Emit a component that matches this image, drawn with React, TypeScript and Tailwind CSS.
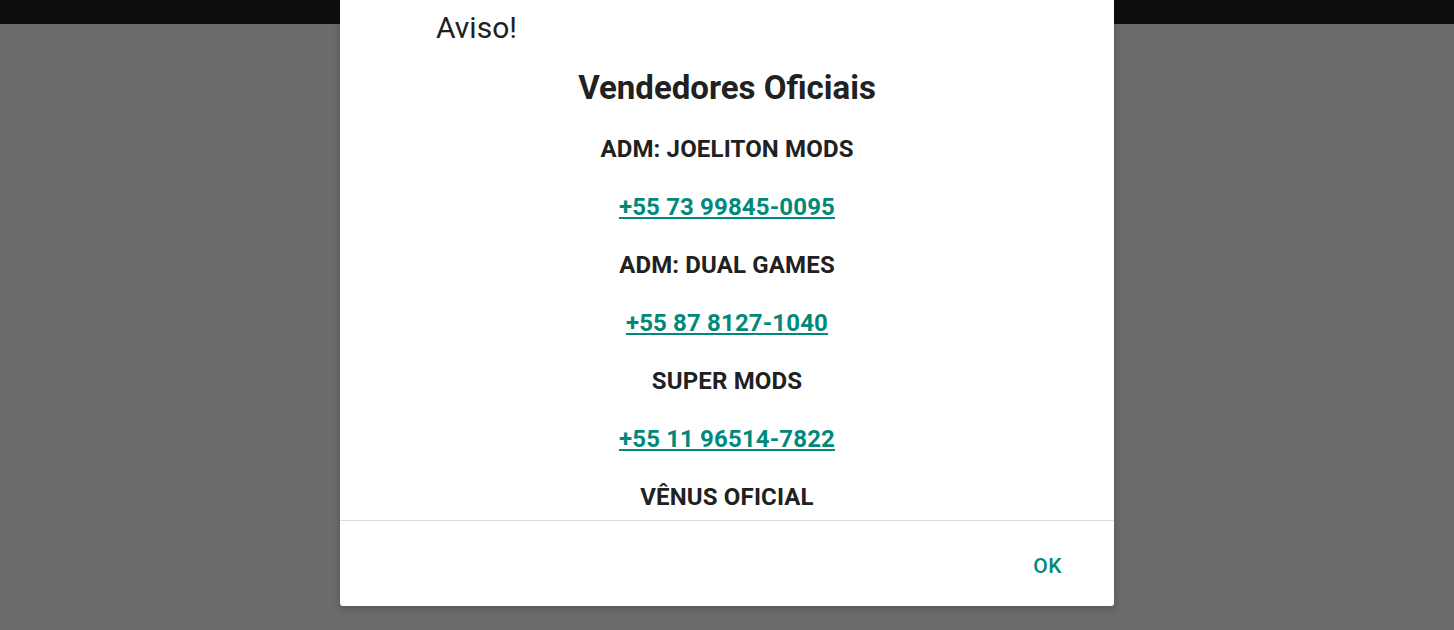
export default function App() {
  const sellers = [
    { name: "ADM: JOELITON MODS", phone: "+55 73 99845-0095" },
    { name: "ADM: DUAL GAMES", phone: "+55 87 8127-1040" },
    { name: "SUPER MODS", phone: "+55 11 96514-7822" },
    { name: "VÊNUS OFICIAL", phone: "" },
  ];

  return (
    <div className="relative h-[630px] w-full overflow-hidden bg-[#6b6b6b] font-['Roboto',sans-serif]">
      {/* status bar behind the dim */}
      <div className="h-[24px] w-full bg-[#0e0e0e]" />

      {/* dialog */}
      <div className="absolute top-0 left-[340px] flex w-[774px] flex-col rounded-b-[3px] bg-white shadow-[0_2px_8px_rgba(0,0,0,0.2)]">
        <div className="h-[520px] overflow-hidden">
          <div className="pt-[10px] pl-[96px] text-[30px] leading-[36px] text-[#212121]">Aviso!</div>

          <div className="mt-[22px] text-center text-[33px] font-bold leading-[40px] text-[#212121]">
            Vendedores Oficiais
          </div>

          <div className="mt-[12px] flex flex-col items-center text-[24px] font-bold leading-[58px] tracking-[0.15px]">
            {sellers.map((s) => (
              <div key={s.name} className="flex flex-col items-center">
                <div className="text-[#212121]">{s.name}</div>
                {s.phone && (
                  <a className="text-[#00897b] underline decoration-[1.5px] underline-offset-[2px]">{s.phone}</a>
                )}
              </div>
            ))}
          </div>
        </div>

        <div className="h-px bg-[#dedede]" />

        <div className="flex h-[85px] items-center justify-end pt-[6px] pr-[52px]">
          <button className="text-[21px] font-medium tracking-[0.5px] text-[#00897b]">OK</button>
        </div>
      </div>
    </div>
  );
}
